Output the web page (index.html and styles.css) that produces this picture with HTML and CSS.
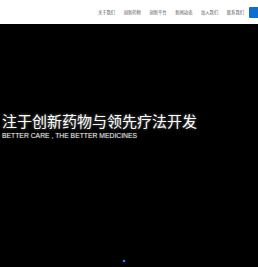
FILE: index.html
```html
<!DOCTYPE html>
<html lang="zh-CN">
  <head>
    <meta charset="UTF-8" />
    <meta name="viewport" content="width=device-width, initial-scale=1.0" />
    <title>创新药物</title>
    <link rel="stylesheet" href="styles.css">
  </head>
  <body>
    <header class="header">
      <nav class="nav">
        <a href="#">关于我们</a>
        <a href="#">创新药物</a>
        <a href="#">创新平台</a>
        <a href="#">新闻动态</a>
        <a href="#">加入我们</a>
        <a href="#">联系我们</a>
      </nav>
      <span class="nav-btn"></span>
    </header>
    <section class="banner">
      <div class="banner-text">
        <h1>注于创新药物与领先疗法开发</h1>
        <p>BETTER CARE , THE BETTER MEDICINES</p>
      </div>
      <div class="dots"><span class="dot"></span></div>
    </section>
  </body>
</html>
```

FILE: styles.css
```css
* {
  box-sizing: border-box;
}
body {
  margin: 0;
  font-family: "Noto Sans CJK SC", "Liberation Sans", sans-serif;
  background-color: #000;
  overflow: hidden;
}
.header {
  height: 24px;
  background-color: #fff;
  display: flex;
  justify-content: flex-end;
  align-items: center;
}
.nav {
  display: flex;
  gap: 8.6px;
  margin-right: 5px;
}
.nav a {
  font-size: 4.3px;
  color: #555;
  text-decoration: none;
  line-height: 1;
}
.nav-btn {
  width: 9px;
  height: 11px;
  background-color: #0a6fd0;
  border-radius: 1px 0 0 1px;
}
.banner {
  height: 243px;
  display: flex;
  flex-direction: column;
  justify-content: space-between;
}
.banner-text {
  padding: 87px 0 0 2px;
  color: #fff;
}
.banner-text h1 {
  margin: 0;
  font-size: 15px;
  font-weight: 400;
  line-height: 20px;
  text-shadow: 0 0 3px rgba(255, 255, 255, 0.5);
}
.banner-text p {
  margin: 1px 0 0;
  font-family: "Liberation Sans", sans-serif;
  font-size: 6.8px;
  line-height: 8px;
  color: #eee;
  text-shadow: 0 0 2px rgba(255, 255, 255, 0.3);
}
.dots {
  display: flex;
  justify-content: center;
  padding: 0 10px 5px 0;
}
.dot {
  width: 2px;
  height: 2px;
  background-color: #2a7cf0;
  box-shadow: 0 0 2px #2a7cf0;
}
```
